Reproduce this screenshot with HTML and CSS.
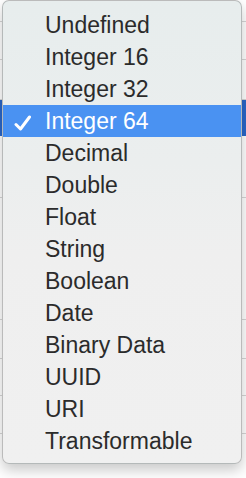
FILE: index.html
```html
<!DOCTYPE html>
<html lang="en">
<head>
    <meta charset="UTF-8">
    <title>Attribute Type</title>
    <link rel="stylesheet" href="styles.css">
</head>
<body>

    <div class="table">
        <div class="row" style="height: 22px"></div>
        <div class="row" style="height: 38px"></div>
        <div class="row" style="height: 40px"></div>
        <div class="row selected" style="height: 36px"></div>
        <div class="row" style="height: 62px"></div>
        <div class="row" style="height: 122px"></div>
        <div class="row" style="height: 39px"></div>
        <div class="row" style="height: 37px"></div>
        <div class="row" style="height: 38px"></div>
    </div>

    <ul class="menu">
        <li class="item">Undefined</li>
        <li class="item">Integer 16</li>
        <li class="item">Integer 32</li>
        <li class="item active">
            <svg class="check" width="18" height="16" viewBox="0 0 18 16">
                <path d="M2 9.5 L6.5 14 L15.5 2" fill="none" stroke="#fff" stroke-width="3" stroke-linecap="round" stroke-linejoin="round"/>
            </svg>
            Integer 64
        </li>
        <li class="item">Decimal</li>
        <li class="item">Double</li>
        <li class="item">Float</li>
        <li class="item">String</li>
        <li class="item">Boolean</li>
        <li class="item">Date</li>
        <li class="item">Binary Data</li>
        <li class="item">UUID</li>
        <li class="item">URI</li>
        <li class="item">Transformable</li>
    </ul>

</body>
</html>
```

FILE: styles.css
```css
body {
    margin: 0;
    background-color: #fff;
    font-family: 'Liberation Sans', Arial, sans-serif;
    position: relative;
    height: 478px;
    overflow: hidden;
}

.table {
    display: flex;
    flex-direction: column;
}

.row {
    border-bottom: 1px solid #d6d6d6;
    box-sizing: border-box;
}

.row.selected {
    background-color: #2a67c9;
    border-bottom: none;
}

/* popup menu lies over the table */
.menu {
    position: absolute;
    top: 0;
    left: 2px;
    width: 240px;
    height: 464px;
    box-sizing: border-box;
    margin: 0;
    padding: 8px 0;
    list-style: none;
    border: 1px solid rgba(0, 0, 0, 0.22);
    border-radius: 7px;
    background: linear-gradient(to bottom, #e7eded 0%, #ebeeee 35%, #efefef 55%, #f0f0f0 100%);
    box-shadow: 0 6px 14px rgba(0, 0, 0, 0.22);
}

.item {
    position: relative;
    height: 32px;
    line-height: 32px;
    padding-left: 42px;
    font-size: 23px;
    color: #2b2b2b;
    white-space: nowrap;
}

.item.active {
    background-color: #4a92f2;
    color: #fff;
}

.check {
    position: absolute;
    left: 11px;
    top: 10px;
}
```
